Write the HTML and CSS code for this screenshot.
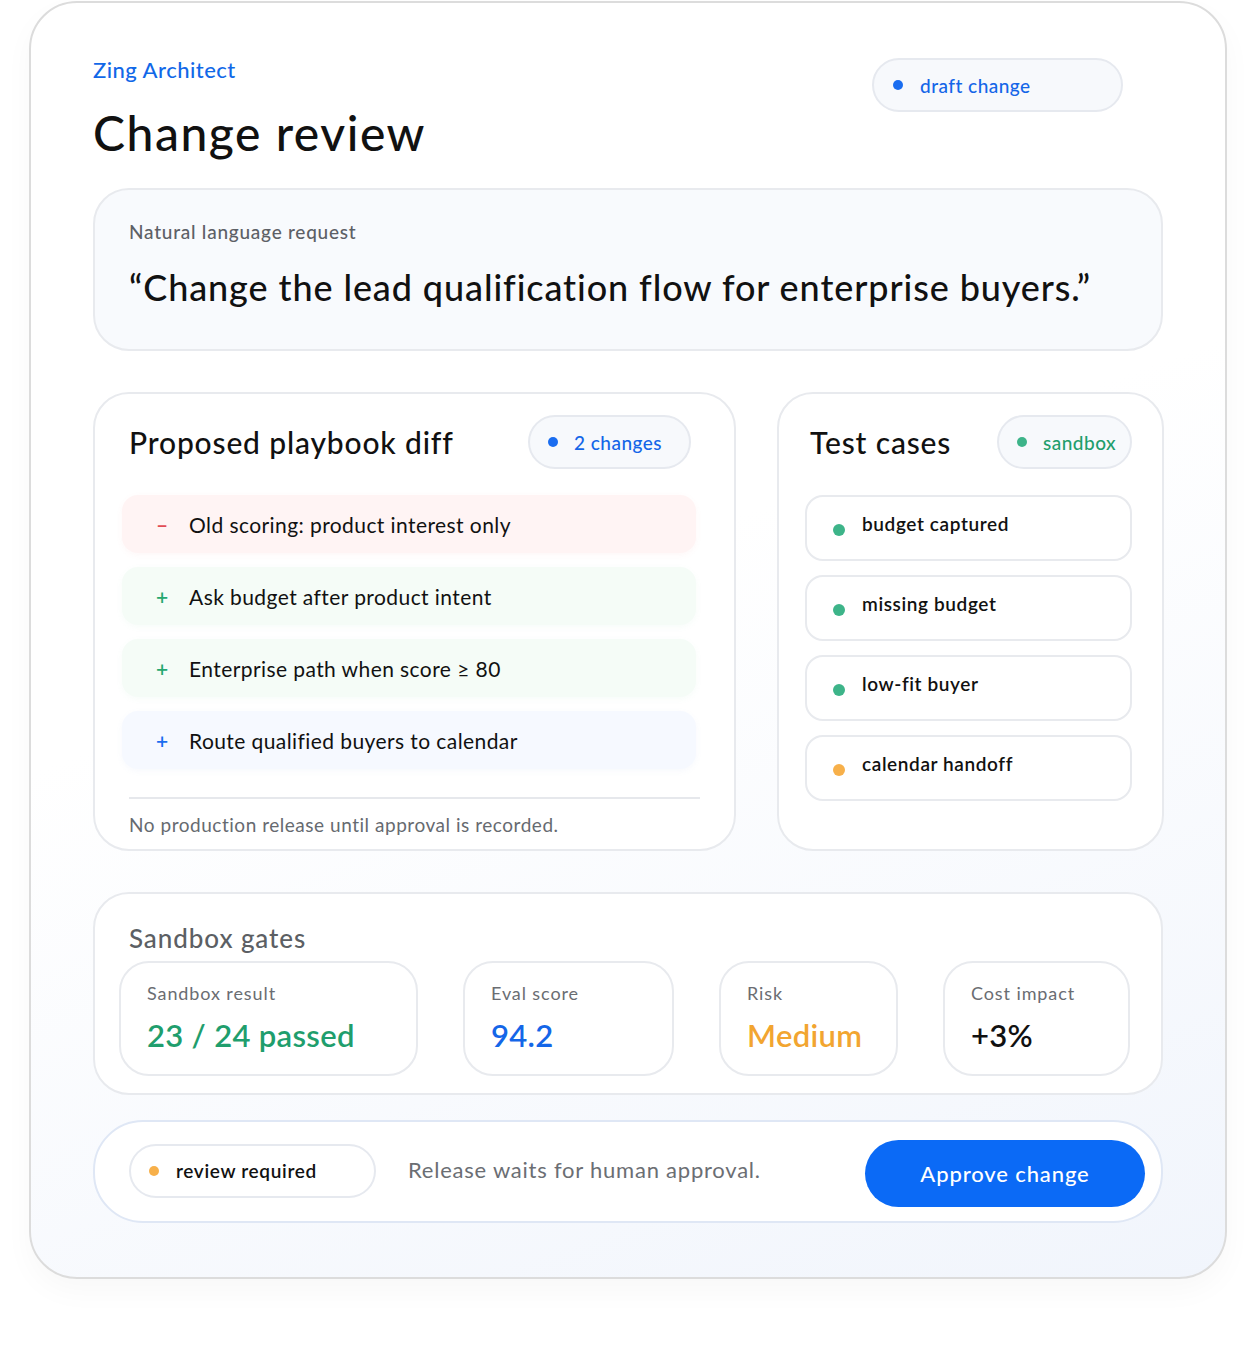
FILE: index.html
```html
<!DOCTYPE html>
<html lang="en">

<head>
    <meta charset="UTF-8">
    <meta name="viewport" content="width=device-width, initial-scale=1.0">
    <title>Change review</title>
    <link rel="stylesheet" href="styles.css">
</head>

<body>
    <main class="panel">
        <header class="top">
            <div>
                <div class="brand">Zing Architect</div>
                <h1>Change review</h1>
            </div>
            <span class="pill pill-top"><i class="dot dot-blue"></i><span class="txt-blue">draft change</span></span>
        </header>

        <section class="request">
            <div class="request-label">Natural language request</div>
            <div class="request-text">“Change the lead qualification flow for enterprise buyers.”</div>
        </section>

        <div class="columns">
            <section class="card diff">
                <div class="card-head">
                    <h2>Proposed playbook diff</h2>
                    <span class="pill"><i class="dot dot-blue"></i><span class="txt-blue">2 changes</span></span>
                </div>
                <ul class="diff-list">
                    <li class="row row-del"><span class="sign sign-red">–</span>Old scoring: product interest only</li>
                    <li class="row row-add"><span class="sign sign-green">+</span>Ask budget after product intent</li>
                    <li class="row row-add"><span class="sign sign-green">+</span>Enterprise path when score ≥ 80</li>
                    <li class="row row-new"><span class="sign sign-blue">+</span>Route qualified buyers to calendar</li>
                </ul>
                <p class="note">No production release until approval is recorded.</p>
            </section>

            <section class="card tests">
                <div class="card-head">
                    <h2>Test cases</h2>
                    <span class="pill"><i class="dot dot-green"></i><span class="txt-green">sandbox</span></span>
                </div>
                <ul class="test-list">
                    <li class="test"><i class="dot dot-green big"></i>budget captured</li>
                    <li class="test"><i class="dot dot-green big"></i>missing budget</li>
                    <li class="test"><i class="dot dot-green big"></i>low-fit buyer</li>
                    <li class="test"><i class="dot dot-orange big"></i>calendar handoff</li>
                </ul>
            </section>
        </div>

        <section class="card gates">
            <h3>Sandbox gates</h3>
            <div class="metrics">
                <div class="metric">
                    <div class="metric-label">Sandbox result</div>
                    <div class="metric-value txt-green">23 / 24 passed</div>
                </div>
                <div class="metric">
                    <div class="metric-label">Eval score</div>
                    <div class="metric-value txt-blue">94.2</div>
                </div>
                <div class="metric">
                    <div class="metric-label">Risk</div>
                    <div class="metric-value txt-orange">Medium</div>
                </div>
                <div class="metric">
                    <div class="metric-label">Cost impact</div>
                    <div class="metric-value">+3%</div>
                </div>
            </div>
        </section>

        <footer class="actions">
            <span class="pill pill-review"><i class="dot dot-orange"></i>review required</span>
            <span class="wait">Release waits for human approval.</span>
            <button class="approve">Approve change</button>
        </footer>
    </main>
</body>

</html>
```

FILE: styles.css
```css
* {
    box-sizing: border-box;
}

body {
    margin: 0;
    background: #fff;
    font-family: Lato, 'Noto Sans', sans-serif;
    color: #111;
    padding: 1px 29px 0 29px;
    height: 1352px;
    letter-spacing: 0.03em;
}

.panel {
    width: 1198px;
    height: 1278px;
    border: 2px solid #dcdcdc;
    border-radius: 48px;
    background: linear-gradient(160deg, #ffffff 45%, #f1f5fc 100%);
    padding: 52px 62px 0 62px;
    box-shadow: 0 12px 30px rgba(0, 0, 0, 0.03);
}

.top {
    display: flex;
    justify-content: space-between;
    align-items: flex-start;
    padding-right: 40px;
}

.brand {
    color: #1168e8;
    font-size: 22px;
    font-weight: 500;
    line-height: 30px;
}

h1 {
    margin: 20px 0 0 0;
    font-size: 48px;
    font-weight: 500;
    line-height: 56px;
    letter-spacing: 0.032em;
}

.pill {
    display: inline-flex;
    align-items: center;
    height: 54px;
    border: 2px solid #e6e9ef;
    border-radius: 27px;
    background: #f7f9fc;
    padding: 0 18px;
    font-size: 19px;
    font-weight: 500;
    gap: 16px;
}

.pill-top {
    width: 251px;
    margin-top: 3px;
    padding-left: 19px;
    gap: 17px;
}

.dot {
    display: inline-block;
    width: 10px;
    height: 10px;
    border-radius: 50%;
    flex: none;
}

.dot.big {
    width: 12px;
    height: 12px;
}

.dot-blue { background: #1a6df0; }
.dot-green { background: #3db489; }
.dot-orange { background: #f7b04a; }

.txt-blue { color: #1466e8; }
.txt-green { color: #1f9e6d; }
.txt-orange { color: #f2a530; }

.request {
    margin-top: 27px;
    height: 163px;
    border: 2px solid #e8eaee;
    border-radius: 36px;
    background: #f8fafd;
    padding: 30px 34px;
}

.request-label {
    font-size: 19px;
    color: #5d6066;
    font-weight: 500;
    letter-spacing: 0.04em;
}

.request-text {
    margin-top: 22px;
    font-size: 36px;
    font-weight: 500;
    letter-spacing: 0.025em;
}

.columns {
    display: grid;
    grid-template-columns: 643px 387px;
    gap: 41px;
    margin-top: 41px;
}

.card {
    border: 2px solid #e8eaee;
    border-radius: 36px;
    background: #fff;
}

.diff,
.tests {
    height: 459px;
}

.diff {
    padding: 21px 34px 0 27px;
}

.tests {
    padding: 21px 30px 0 26px;
}

.card-head {
    display: flex;
    justify-content: space-between;
    align-items: center;
    padding-left: 7px;
}

.tests .card-head {
    padding-left: 5px;
}

h2 {
    margin: 0;
    font-size: 30px;
    font-weight: 500;
    letter-spacing: 0.028em;
}

.diff .pill {
    width: 163px;
    margin-right: 9px;
}

.tests .pill {
    width: 135px;
    gap: 16px;
}

ul {
    list-style: none;
    margin: 0;
    padding: 0;
}

.diff-list {
    margin-top: 26px;
    display: flex;
    flex-direction: column;
    gap: 14px;
}

.row {
    height: 58px;
    border-radius: 16px;
    display: flex;
    align-items: center;
    font-size: 21px;
    padding-left: 34px;
    margin-right: 4px;
    letter-spacing: 0.02em;
}

.row-del { background: #fff4f4; box-shadow: 0 2px 6px rgba(240, 120, 120, 0.06); }
.row-add { background: #f5fcf7; box-shadow: 0 2px 6px rgba(120, 200, 150, 0.06); }
.row-new { background: #f6f9ff; box-shadow: 0 2px 6px rgba(120, 150, 220, 0.06); }

.sign {
    width: 33px;
    font-weight: 600;
}

.sign-red { color: #e24c55; }
.sign-green { color: #25a870; }
.sign-blue { color: #1a6df0; }

.note {
    margin: 28px 0 0 7px;
    border-top: 2px solid #e6e8ec;
    padding-top: 14px;
    font-size: 19px;
    color: #666a70;
    letter-spacing: 0.028em;
}

.test-list {
    margin-top: 26px;
    display: flex;
    flex-direction: column;
    gap: 14px;
}

.test {
    height: 66px;
    border: 2px solid #e8eaee;
    border-radius: 18px;
    display: flex;
    align-items: flex-start;
    padding: 15px 0 0 26px;
    font-size: 19px;
    font-weight: 600;
    gap: 17px;
    letter-spacing: 0.032em;
}

.test .dot {
    margin-top: 12px;
}

.gates {
    margin-top: 41px;
    height: 203px;
    padding: 28px 32px 0 24px;
}

h3 {
    margin: 0 0 0 10px;
    font-size: 26px;
    font-weight: 500;
    color: #5c5f64;
    letter-spacing: 0.035em;
}

.metrics {
    margin-top: 7px;
    display: grid;
    grid-template-columns: 299px 211px 179px 187px;
    gap: 45px;
}

.metric {
    height: 115px;
    border: 2px solid #e8eaee;
    border-radius: 30px;
    padding: 19px 26px;
}

.metric-label {
    font-size: 18px;
    color: #6a6d72;
    letter-spacing: 0.05em;
}

.metric-value {
    margin-top: 12px;
    font-size: 31px;
    font-weight: 600;
    letter-spacing: 0.01em;
}

.actions {
    margin-top: 25px;
    height: 103px;
    border: 2px solid #dfe7f5;
    border-radius: 50px;
    background: #fff;
    display: flex;
    align-items: center;
    padding: 0 16px 0 34px;
}

.pill-review {
    width: 247px;
    background: #fff;
    gap: 17px;
    margin-top: -2px;
    font-weight: 600;
    font-size: 19px;
    letter-spacing: 0.035em;
}

.wait {
    margin-left: 32px;
    font-size: 22px;
    color: #6b6e73;
    margin-top: -4px;
    letter-spacing: 0.035em;
}

.approve {
    margin-left: auto;
    width: 280px;
    height: 67px;
    border: none;
    border-radius: 34px;
    background: #0b6af6;
    color: #fff;
    font-family: Lato, 'Noto Sans', sans-serif;
    font-size: 22px;
    font-weight: 500;
    letter-spacing: 0.04em;
    margin-top: 3px;
}
```
